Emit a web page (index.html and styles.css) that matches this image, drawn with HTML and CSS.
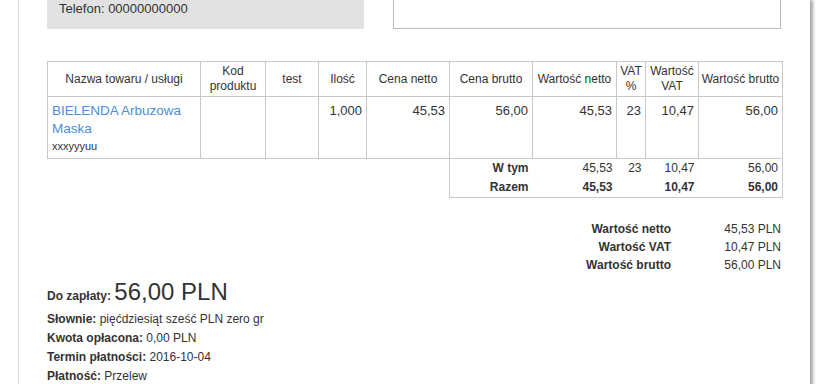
FILE: index.html
```html
<!DOCTYPE html>
<html lang="pl">
<head>
    <meta charset="UTF-8">
    <meta name="viewport" content="width=device-width, initial-scale=1.0">
    <title>Faktura</title>
    <link rel="stylesheet" href="styles.css">
</head>
<body>

    <div class="sheet">
        <!-- Dane stron -->
        <div class="parties">
            <div class="seller">Telefon: 00000000000</div>
            <div class="buyer"></div>
        </div>

        <!-- Pozycje faktury -->
        <table class="items">
            <thead>
                <tr>
                    <th>Nazwa towaru / usługi</th>
                    <th>Kod<br>produktu</th>
                    <th>test</th>
                    <th>Ilość</th>
                    <th>Cena netto</th>
                    <th>Cena brutto</th>
                    <th>Wartość netto</th>
                    <th>VAT<br>%</th>
                    <th>Wartość<br>VAT</th>
                    <th>Wartość brutto</th>
                </tr>
            </thead>
            <tbody>
                <tr>
                    <td class="name">
                        <a href="#">BIELENDA Arbuzowa Maska</a>
                        <span class="desc">xxxyyyuu</span>
                    </td>
                    <td></td>
                    <td></td>
                    <td class="num">1,000</td>
                    <td class="num">45,53</td>
                    <td class="num">56,00</td>
                    <td class="num">45,53</td>
                    <td class="num">23</td>
                    <td class="num">10,47</td>
                    <td class="num">56,00</td>
                </tr>
            </tbody>
            <tfoot>
                <tr>
                    <td class="blank" colspan="5"></td>
                    <td class="first"><b>W tym</b></td>
                    <td>45,53</td>
                    <td>23</td>
                    <td>10,47</td>
                    <td class="last">56,00</td>
                </tr>
                <tr class="bottom">
                    <td class="blank" colspan="5"></td>
                    <td class="first"><b>Razem</b></td>
                    <td><b>45,53</b></td>
                    <td></td>
                    <td><b>10,47</b></td>
                    <td class="last"><b>56,00</b></td>
                </tr>
            </tfoot>
        </table>

        <!-- Podsumowanie -->
        <div class="totals">
            <span class="label">Wartość netto</span><span>45,53 PLN</span>
            <span class="label">Wartość VAT</span><span>10,47 PLN</span>
            <span class="label">Wartość brutto</span><span>56,00 PLN</span>
        </div>

        <div class="payment">
            <p class="due"><b>Do zapłaty:</b> <span class="amount">56,00 PLN</span></p>
            <p><b>Słownie:</b> pięćdziesiąt sześć PLN zero gr</p>
            <p><b>Kwota opłacona:</b> 0,00 PLN</p>
            <p><b>Termin płatności:</b> 2016-10-04</p>
            <p><b>Płatność:</b> Przelew</p>
        </div>
    </div>

</body>
</html>
```

FILE: styles.css
```css
* {
    margin: 0;
    padding: 0;
    box-sizing: border-box;
}

body {
    font-family: 'Liberation Sans', Arial, sans-serif;
    background-color: #fff;
    color: #333;
    font-size: 12px;
}

/* Kartka faktury */
.sheet {
    margin-left: 18px;
    width: 792px;
    min-height: 400px;
    background-color: #fff;
    border-left: 1px solid #ddd;
    box-shadow: 3px 0 3px rgba(0, 0, 0, 0.35);
    padding: 0 29px 0 28px;
}

.parties {
    display: flex;
    justify-content: space-between;
}

.seller {
    width: 317px;
    height: 29px;
    background-color: #e2e2e2;
    padding: 0 12px;
    font-size: 13px;
    line-height: 17px;
}

.buyer {
    width: 388px;
    height: 29px;
    border: 1px solid #bbb;
    border-top: none;
}

/* Tabela pozycji */
.items {
    width: 734px;
    margin-top: 32px;
    border-collapse: collapse;
    table-layout: fixed;
}

.items th,
.items td {
    border: 1px solid #c8c8c8;
    padding: 3px 4px;
    vertical-align: top;
}

.items th {
    font-weight: normal;
    text-align: center;
    vertical-align: middle;
    line-height: 15px;
    height: 35px;
    padding: 2px 1px;
}

.items th:nth-child(1) { width: 153px; }
.items th:nth-child(2) { width: 65px; }
.items th:nth-child(3) { width: 53px; }
.items th:nth-child(4) { width: 48px; }
.items th:nth-child(5) { width: 83px; }
.items th:nth-child(6) { width: 83px; }
.items th:nth-child(7) { width: 84px; }
.items th:nth-child(8) { width: 29px; }
.items th:nth-child(9) { width: 53px; }
.items th:nth-child(10) { width: 84px; }

.items tbody td {
    height: 62px;
    padding: 5px 4px 2px;
    font-size: 13px;
    line-height: 18px;
}

.items .name a {
    color: #4a8fd8;
    font-size: 13.5px;
    text-decoration: none;
}

.items .desc {
    display: block;
    font-size: 11px;
    line-height: 16px;
}

.items .num {
    text-align: right;
}

/* Podsumowanie pod tabelą */
.items tfoot td {
    border: none;
    text-align: right;
    line-height: 19px;
    padding: 0 4px;
}

.items tfoot td.first {
    border-left: 1px solid #c8c8c8;
}

.items tfoot td.last {
    border-right: 1px solid #c8c8c8;
}

.items tfoot tr.bottom td {
    border-bottom: 1px solid #c8c8c8;
}

.items tfoot tr.bottom td.blank {
    border-bottom: none;
}

.totals {
    display: grid;
    grid-template-columns: auto 110px;
    justify-content: end;
    margin-top: 22px;
    line-height: 18px;
    text-align: right;
}

.totals .label {
    font-weight: bold;
}

.payment {
    margin-top: 4px;
}

.payment p {
    line-height: 19px;
}

.payment .due {
    line-height: 27px;
}

.payment .amount {
    font-size: 24px;
}
```
